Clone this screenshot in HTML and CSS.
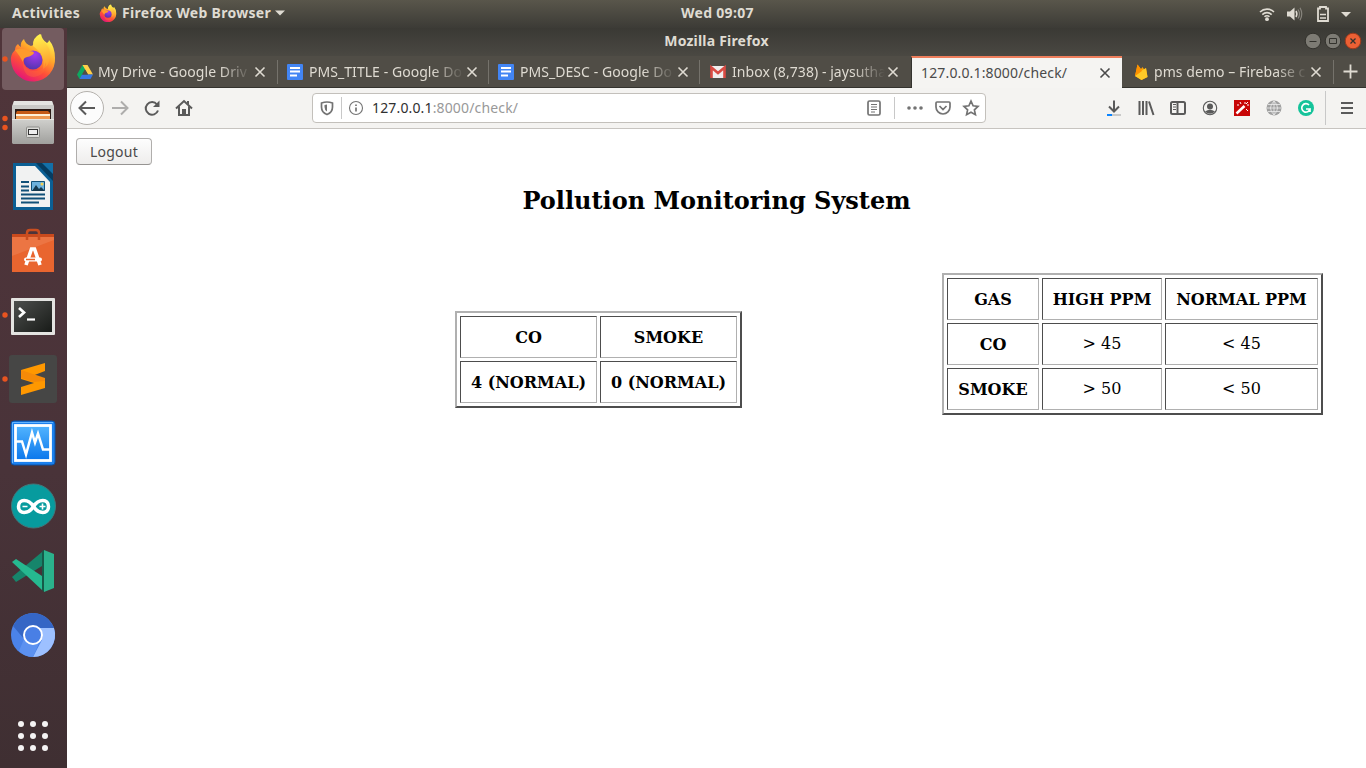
FILE: index.html
```html
<!DOCTYPE html>
<html lang="en">
<head>
<meta charset="utf-8">
<title>Pollution Monitoring System</title>
<link rel="stylesheet" href="styles.css">
</head>
<body>
<header class="panel">
  <span class="activities">Activities</span>
  <span class="app-menu">
    <svg width="18" height="18" viewBox="10 5 46 48"><use href="#firefox"/></svg>
    <span class="app-name">Firefox Web Browser</span>
    <svg width="10" height="6"><path d="M0 .5h10L5 5.500z" fill="#dfdbd2"/></svg>
  </span>
  <span class="clock">Wed 09:07</span>
  <svg class="status" width="100" height="27" viewBox="1256 0 100 27" fill="none" stroke="#dfdbd2">
    <path d="M1260 11a10 10 0 0 1 14 0M1262.300 13.600a6.700 6.700 0 0 1 9.400 0M1264.500 15.800a3.500 3.500 0 0 1 5 0" stroke-width="1.600"/><circle cx="1267" cy="18.200" r="1.900" fill="#dfdbd2" stroke="none"/>
    <path d="M1287 10.500h3l4.500-4v13l-4.500-4h-3z" fill="#dfdbd2" stroke="none"/><path d="M1296 10q1.800 3 0 6" stroke-width="1.500"/><path d="M1298 8.500q3 4.500 0 9M1300 6.800q3.500 6.200 0 12.400" stroke="#87847c" stroke-width="1.200"/>
    <path d="M1318 7.500h2V6h6v1.500h2v12.500h-10z" stroke-width="1.800"/><path d="M1320 13.500h6M1320 17h6" stroke-width="1.600"/>
    <path d="M1341 11h10l-5 5z" fill="#dfdbd2" stroke="none"/>
  </svg>
</header>
<div class="desktop">
<nav class="dock">
  <svg width="67" height="64">
    <defs>
      <linearGradient id="fxBody" x1=".8" y1=".1" x2=".3" y2="1"><stop offset="0" stop-color="#fff44f"/><stop offset=".35" stop-color="#ffa52a"/><stop offset=".65" stop-color="#ff4f38"/><stop offset="1" stop-color="#e2127b"/></linearGradient>
      <radialGradient id="fxGlobe" cx=".6" cy=".2" r=".9"><stop offset="0" stop-color="#a63af0"/><stop offset="1" stop-color="#4a35a8"/></radialGradient>
      <linearGradient id="fxFlame" x1=".5" y1="0" x2=".6" y2="1"><stop offset="0" stop-color="#fff44f"/><stop offset="1" stop-color="#ff9328"/></linearGradient>
      <linearGradient id="gray" x1="0" y1="0" x2="0" y2="1"><stop offset="0" stop-color="#d0d0cd"/><stop offset="1" stop-color="#a0a09d"/></linearGradient>
      <linearGradient id="blue" x1="0" y1="0" x2="0" y2="1"><stop offset="0" stop-color="#53b5ff"/><stop offset="1" stop-color="#0a76eb"/></linearGradient>
      <linearGradient id="term" x1="0" y1="0" x2="1" y2="1"><stop offset="0" stop-color="#4d4f4d"/><stop offset="1" stop-color="#181b18"/></linearGradient>
      <g id="firefox">
        <path d="M15 22q0-4 3-6 1 2 3 3-1-5 3-8 1 5 7 7 2-1 3-1 0-7 7-11 1 6 6 9 2-1 2-3 6 7 6 18a22 22 0 0 1-44 3q-1-6 4-11z" fill="url(#fxBody)"/>
        <path d="M33 18q-1-8 7-12 1 6 6 10 4 4 4 11 0 10-7 14 3-14-10-23z" fill="url(#fxFlame)"/>
        <circle cx="33" cy="32" r="9.500" fill="url(#fxGlobe)"/>
        <path d="M15 22q8-3 14 1 5 0 5 2-2 3-7 4-4 1-4 5-3-6-8-12z" fill="#ff9a2c"/>
        <path d="M23 34q3 10 13 9 8-1 10-9 1 13-12 15-11 0-11-15z" fill="#ff6b36" opacity=".4"/>
      </g>
    </defs>
    <rect x="2" y="0" width="62" height="62" rx="4" fill="#745c60"/>
    <use href="#firefox"/><circle cx="5" cy="31" r="2.700" fill="#e95420"/>
  </svg>
  <svg width="67" height="64">
    <path d="M14 9h38l2 5v13H12V14z" fill="#c9c9c6"/><path d="M14 9h38l1 4H13z" fill="#e4e4e1"/><path d="M15 17h36v10H15z" fill="#2b1c17"/><path d="M17 19h31l2 2v6H16v-6z" fill="#c55a17"/><path d="M16 22h34v2H16z" fill="#fff0d8"/><path d="M16 24h34v3H16z" fill="#ee9a53"/>
    <path d="M12 27h42v24l-1 1H13l-1-1z" fill="url(#gray)"/><path d="M12 27.500h42" stroke="#e6e6e3"/><rect x="26.500" y="35" width="13" height="10.500" rx="1" fill="#dadad7" stroke="#8d8d8a"/><rect x="28.500" y="37.500" width="9" height="5" fill="#eee" stroke="#333"/>
    <circle cx="5" cy="26.500" r="2.700" fill="#e95420"/><circle cx="5" cy="35.500" r="2.700" fill="#e95420"/>
  </svg>
  <svg width="67" height="64">
    <path d="M13 7h40v47H13z" fill="#0b5f94"/><path d="M36 7h17v18z" fill="#063c60"/><path d="M42 7h11v11z" fill="#1370a8"/><path d="M16 10h19l15 16v25H16z" fill="#f1f2f2"/>
    <path d="M21 26h8M21 30.500h8M21 34.500h8M21 38.500h24M21 42.500h24M21 46.500h18" stroke="#105078" stroke-width="2"/><path d="M31.500 25.500h13v9h-13z" fill="#6bb0dc" stroke="#105078"/><path d="M32 35l4-6 3 4 2-2 4 4z" fill="#14384e"/><circle cx="42" cy="28" r="1.500" fill="#f5cf50"/>
  </svg>
  <svg width="67" height="64">
    <path d="M12 14h42v38H12z" fill="#e9652f"/><path d="M12 14h42v3H12z" fill="#c94a1d"/><path d="M12 17h42v3l-42 16z" fill="#f08558" opacity=".5"/><path d="M27 20v-7q0-3 3-3h6q3 0 3 3v7" fill="none" stroke="#c94e20" stroke-width="2.500"/>
    <path d="M26 45l5.500-16h3L40 45" fill="none" stroke="#fff" stroke-width="3.600"/><rect x="24" y="37.500" width="18" height="4" rx="2" fill="#fff"/><path d="M26 39.500h9" stroke="#e9652f" stroke-width="1.500"/>
  </svg>
  <svg width="67" height="64">
    <rect x="11" y="14" width="44" height="37" rx="1" fill="#e4e4e1"/><rect x="14" y="17" width="38" height="31" fill="url(#term)"/><path d="M19 24l5 4.500-5 4.500" fill="none" stroke="#fff" stroke-width="2.700"/><path d="M27 35.500h8" stroke="#fff" stroke-width="2.200"/><circle cx="5" cy="31" r="2.700" fill="#e95420"/>
  </svg>
  <svg width="67" height="64">
    <rect x="9" y="7" width="48" height="48" rx="3" fill="#464645"/><path d="M21 22l24-7v8l-13 5 13 3v9l-24 7v-8l13-4-13-4z" fill="#ff9800"/><path d="M21 22l24 8v3l-11 1-13-4z" fill="#f58a08"/><circle cx="5" cy="31" r="2.700" fill="#e95420"/>
  </svg>
  <svg width="67" height="64">
    <rect x="11" y="9" width="44" height="44" rx="3" fill="#1b80ee" stroke="#0c51a4"/><path d="M12.500 51V10.500H53" stroke="#65b4ff" fill="none"/><rect x="15.500" y="13.500" width="35" height="35" fill="url(#blue)" stroke="#fff" stroke-width="2.800"/><path d="M16 29.500h6l4 13 6-22 3 10 3-9 5 16h8" fill="none" stroke="#fff" stroke-width="2.500"/>
  </svg>
  <svg width="67" height="64">
    <circle cx="33.500" cy="30" r="22" fill="#079b9e" stroke="#43787a"/><path d="M33.500 30.500c-5-8-15-8-15 0s10 8 15 0 15-8 15 0-10 8-15 0z" fill="none" stroke="#fff" stroke-width="3.500"/><path d="M22.500 30.500h5M39.500 30.500h6M42.500 27.500v6" stroke="#fff" stroke-width="1.600"/>
  </svg>
  <svg width="67" height="64">
    <path d="M12 37L36 17l6-5v14L16 42z" fill="#16856b"/><path d="M12 22l4-3 26 17v14z" fill="#26b990"/><path d="M42 11l2-1v42l-2-2z" fill="#155a49"/><path d="M44 10l10 4v34l-10 4z" fill="#2bb28c"/>
  </svg>
  <svg width="67" height="64">
    <circle cx="33" cy="31" r="22" fill="#4b83e9"/><path d="M13 22a22 22 0 0 1 39-2l2 4H33q-7 0-9 11z" fill="#3566c5"/><path d="M54 24a22 22 0 0 1-21 29l9-17q2-7-3-12z" fill="#9dc0ff"/><path d="M24 35q5 8 15 4l-6 14q-8 0-14-6z" fill="#5c91f0"/><circle cx="33" cy="31" r="9" fill="#497fe5" stroke="#fff" stroke-width="2"/>
  </svg>
  <svg class="apps" width="67" height="64" fill="#f5f3f3"><circle cx="21" cy="20" r="3"/><circle cx="33" cy="20" r="3"/><circle cx="45" cy="20" r="3"/><circle cx="21" cy="32" r="3"/><circle cx="33" cy="32" r="3"/><circle cx="45" cy="32" r="3"/><circle cx="21" cy="44" r="3"/><circle cx="33" cy="44" r="3"/><circle cx="45" cy="44" r="3"/></svg>
</nav>
<main class="window">
  <div class="titlebar">
    <span class="window-title">Mozilla Firefox</span>
    <svg class="controls" width="58" height="18" viewBox="1304 32 58 18" fill="none" stroke="#33322d"><circle cx="1313" cy="41" r="7.800" fill="#7d7b74"/><path d="M1309.500 41.500h7"/><circle cx="1333" cy="41" r="7.800" fill="#7d7b74"/><path d="M1329.500 38.500h7v5h-7z"/><circle cx="1353" cy="41" r="7.800" fill="#ec6034" stroke="#9e3a1c"/><path d="M1350.500 38.500l5 5m0-5l-5 5" stroke-width="1.300"/></svg>
  </div>
  <div class="tabs">
    <div class="tab"><svg width="16" height="16"><path d="M5.500 1h5L5 11l-2.500 4L0 10.500z" fill="#0da960"/><path d="M5.500 1h5L16 10.500h-5z" fill="#ffcf48"/><path d="M5 10.500h11L13.500 15h-11z" fill="#3777e3"/><path d="M8 5.500l3 5H5z" fill="#504d46"/></svg><span class="label">My Drive - Google Driv</span><svg class="close" width="16" height="16"><path d="M3.500 3.500l9 9m0-9l-9 9"/></svg></div>
    <div class="tab"><svg width="16" height="16"><rect width="16" height="16" rx="1" fill="#4285f4"/><path d="M3 4h10M3 7.500h10M3 11.500h7" stroke="#fff" stroke-width="2"/></svg><span class="label">PMS_TITLE - Google Do</span><svg class="close" width="16" height="16"><path d="M3.500 3.500l9 9m0-9l-9 9"/></svg></div>
    <div class="tab"><svg width="16" height="16"><rect width="16" height="16" rx="1" fill="#4285f4"/><path d="M3 4h10M3 7.500h10M3 11.500h7" stroke="#fff" stroke-width="2"/></svg><span class="label">PMS_DESC - Google Do</span><svg class="close" width="16" height="16"><path d="M3.500 3.500l9 9m0-9l-9 9"/></svg></div>
    <div class="tab mail"><svg width="16" height="16"><path d="M1 2h14v12H1z" fill="#f1eeee"/><path d="M1.500 14V3.500L8 9l6.500-5.500V14" fill="none" stroke="#d94b43" stroke-width="2.600"/></svg><span class="label">Inbox (8,738) - jaysutha</span><svg class="close" width="16" height="16"><path d="M3.500 3.500l9 9m0-9l-9 9"/></svg></div>
    <div class="tab active"><span class="label">127.0.0.1:8000/check/</span><svg class="close" width="16" height="16"><path d="M3.500 3.500l9 9m0-9l-9 9"/></svg></div>
    <div class="tab last"><svg width="16" height="16"><path d="M2 12L4.500.5 8 5l1.500-2 2 3 1.500-2 1.500 9-6 3z" fill="#ffa000"/><path d="M2 12l6-5 5-3 1.500 9-6 3z" fill="#ffca28"/><path d="M2 12L4.500.5 9 7z" fill="#ff9100"/></svg><span class="label">pms demo – Firebase c</span><svg class="close" width="16" height="16"><path d="M3.500 3.500l9 9m0-9l-9 9"/></svg></div>
    <svg class="new-tab" width="32" height="32"><path d="M9.500 15.500h14M16.500 8.500v14" stroke="#dfdbd2" stroke-width="1.800"/></svg>
  </div>
  <div class="toolbar">
    <svg class="back" width="34" height="40" viewBox="-17 -20 34 40"><circle r="16.500" fill="#fcfcfc" stroke="#b4b1ad"/><path d="M8 0H-7M-1-6.500L-7.500 0-1 6.500" class="line"/></svg>
    <svg width="32" height="32" viewBox="-16 -16 32 32" opacity=".45"><path d="M-8 0H7M1-6.500L7.500 0 1 6.500" class="line"/></svg>
    <svg width="32" height="32" viewBox="-16 -16 32 32"><path d="M5-3.500A6.300 6.300 0 1 0 6 2.500" class="line"/><path d="M7.500-7.500V-1H1z" fill="#5a5a5a"/></svg>
    <svg width="32" height="32" viewBox="-16 -16 32 32"><path d="M-8 .5L0-7 8 .5M-5-1.500V7H5v-8.500" class="line"/><path d="M-2 7V1h4v6M3-5V-7h2v4" fill="#5a5a5a"/></svg>
    <div class="urlbar">
      <svg width="28" height="28" viewBox="-14 -14 28 28"><path d="M-5.500-5Q0-7 5.500-5V-1Q5.500 4.500 0 6.500-5.500 4.500-5.500-1z" class="field"/><path d="M0-3.500V3.500Q-2.500 2-2.500-1v-2z" fill="#737373"/></svg>
      <i class="rule"></i>
      <svg class="info" width="28" height="28" viewBox="-14 -14 28 28"><circle r="6.500" class="field thin"/><path d="M0-3.500v1.500M0-.5V3.500" class="field"/></svg>
      <span class="address"><b>127.0.0.1</b>:8000/check/</span>
      <svg class="reader" width="28" height="28" viewBox="-14 -14 28 28"><rect x="-6" y="-7" width="12" height="14" rx="1.500" class="field"/><path d="M-3-3.500h6M-3-1h6M-3 1.500h6M-3 4h4" class="field thin"/></svg>
      <i class="rule"></i>
      <svg class="dots" width="28" height="28" viewBox="-14 -14 28 28" fill="#737373"><circle cx="-6" r="1.800"/><circle r="1.800"/><circle cx="6" r="1.800"/></svg>
      <svg width="28" height="28" viewBox="-14 -14 28 28"><path d="M-6-6H6Q7-6 7-5V-1A7 7 0 0 1-7-1V-5Q-7-6-6-6zM-3.500-2L0 1.500 3.500-2" class="field"/></svg>
      <svg width="28" height="28" viewBox="-14 -14 28 28"><path d="M0-7L2.100-2.200 7-1.700 3.400 1.800 4.400 6.700 0 4.200-4.400 6.700-3.400 1.800-7-1.700-2.100-2.200z" class="field"/></svg>
    </div>
    <div class="tools">
      <svg width="32" height="32" viewBox="-16 -16 32 32"><path d="M0-7.500V3M-5-1.500L0 3.500 5-1.500" class="line"/><path d="M-7 7h14" stroke="#c9c9c9" stroke-width="2"/><path d="M-7 7h5" stroke="#0a84ff" stroke-width="2"/></svg>
      <svg width="32" height="32" viewBox="-16 -16 32 32"><path d="M-6.500-7V7M-3-7V7M.500-7V7M3-6.500L7.500 7" class="line"/></svg>
      <svg width="32" height="32" viewBox="-16 -16 32 32"><rect x="-7" y="-6" width="14" height="12" rx="1.500" class="line"/><path d="M-.5-6V6" class="line"/><path d="M-5-3.500h3M-5-1h3M-5 1.500h3" stroke="#5a5a5a"/></svg>
      <svg width="32" height="32" viewBox="-16 -16 32 32"><circle r="6.700" class="line thin"/><circle cy="-1.500" r="3" fill="#5a5a5a"/><path d="M-5 3.500Q0 0 5 3.500 0 8-5 3.500z" fill="#5a5a5a"/></svg>
      <svg width="32" height="32" viewBox="-16 -16 32 32"><path d="M-8-8H8V8H-8z" fill="#c80606"/><path d="M-5.500 5.500L2.500-2" stroke="#fff" stroke-width="2.500"/><path d="M3-6v2M5-3h2M-2-6l1 2M4 1l2 2M-5-3h2M6-6L4-4" stroke="#fff"/></svg>
      <svg width="32" height="32" viewBox="-16 -16 32 32"><circle r="7.500" fill="#a0a0a0"/><path d="M-7 0H7M0-7V7M-6-3.500H6M-6 3.500H6M0-7Q-7 0 0 7 7 0 0-7" stroke="#eee" stroke-width=".8" fill="none"/></svg>
      <svg width="32" height="32" viewBox="-16 -16 32 32"><circle r="8" fill="#15c39a"/><path d="M3-3A4.200 4.200 0 1 0 4 1H0M4 1V4" fill="none" stroke="#fff" stroke-width="1.700"/></svg>
    </div>
    <i class="rule tall"></i>
    <svg class="menu" width="32" height="32" viewBox="-16 -16 32 32"><path d="M-6-5H6M-6 0H6M-6 5H6" class="line"/></svg>
  </div>
  <section class="page">
    <button class="logout">Logout</button>
    <h2>Pollution Monitoring System</h2>
    <div class="tables">
      <table class="readings">
        <tr><th>CO</th><th>SMOKE</th></tr>
        <tr><th>4 (NORMAL)</th><th>0 (NORMAL)</th></tr>
      </table>
      <table class="limits">
        <tr><th class="gas">GAS</th><th class="high">HIGH PPM</th><th class="normal">NORMAL PPM</th></tr>
        <tr><th>CO</th><td>&gt; 45</td><td>&lt; 45</td></tr>
        <tr><th>SMOKE</th><td>&gt; 50</td><td>&lt; 50</td></tr>
      </table>
    </div>
  </section>
</main>
</div>
</body>
</html>
```
FILE: styles.css
```css
* { box-sizing: border-box; }
body { margin: 0; width: 1366px; height: 768px; overflow: hidden; font: 14px "Noto Sans", sans-serif; color: #dfdbd2; background: #fff; }
svg { display: block; flex: none; }
.panel { display: grid; grid-template-columns: 99px 582px 1fr auto; align-items: center; height: 28px; padding-right: 10px; background: linear-gradient(#59564b, #3c3b36); font-weight: bold; font-size: 14px; letter-spacing: .3px; white-space: nowrap; line-height: 26px; }
.panel > span { height: 28px; }
.activities { padding-left: 12px; }
.app-menu { display: flex; align-items: center; padding-bottom: 2px; }
.app-name { margin: 0 4px 0 5px; }
.desktop { display: flex; height: 740px; }
.dock { display: flex; flex-direction: column; width: 67px; background: linear-gradient(#50353a, #493339 60%, #3f2f32); }
.apps { margin-top: 36px; }
.window { flex: 1; min-width: 0; display: flex; flex-direction: column; }
.titlebar { display: grid; grid-template-columns: 1fr auto 1fr; height: 28px; align-items: center; background: linear-gradient(#3a3934, #4a4842); font-weight: bold; line-height: 26px; letter-spacing: .2px; padding-bottom: 2px; }
.window-title { grid-column: 2; }
.controls { justify-self: end; margin-right: 4px; }
.tabs { display: flex; height: 32px; background: #504d46; box-shadow: inset 0 -1px #34332e; }
.tab { position: relative; display: flex; align-items: center; width: 211px; padding: 0 9px; flex: none; }
.tab:first-child { padding: 0 10px; }
.mail { padding: 0 10px; }
.tab.last { width: 212px; padding: 0 10px 0 11px; }
.tab:not(.active)::after { content: ""; position: absolute; right: 0; top: 4px; height: 24px; width: 1px; background: #75726b; }
.tab.mail::after { display: none; }
.label { flex: 1; min-width: 0; margin: 0 0 0 5px; letter-spacing: .06px; overflow: hidden; white-space: nowrap; line-height: 24px; -webkit-mask-image: linear-gradient(to right, #000 calc(100% - 32px), transparent); mask-image: linear-gradient(to right, #000 calc(100% - 32px), transparent); }
.tab:nth-child(2) .label, .tab:nth-child(3) .label { margin-left: 6px; letter-spacing: .05px; }
.mail .label { margin-left: 6px; }
.close { fill: none; stroke: #dfdbd2; stroke-width: 1.6; }
.tab.active { background: #f5f4f2; color: #4a4a4a; border-top: 2px solid #ee7e5c; border-left: 1px solid #34332e; padding: 0 9px 1px 9px; }
.active .label { margin-left: 0; letter-spacing: .15px; mask-image: none; -webkit-mask-image: none; }
.active .close { stroke: #4a4a4a; }
.toolbar { display: flex; align-items: center; height: 41px; padding: 0 3px 1px; background: #f4f3f1; border-bottom: 1px solid #c7c4c0; color: #999; }
.line { fill: none; stroke: #5a5a5a; stroke-width: 2; }
.field { fill: none; stroke: #737373; stroke-width: 1.7; }
.thin { stroke-width: 1.1; }
.urlbar { display: flex; align-items: center; width: 674px; height: 30px; margin-left: 112px; background: #fff; border: 1px solid #c3c0bb; border-radius: 4px; }
.rule { width: 1px; height: 22px; background: #c8c8c8; }
.address { flex: 1; margin-left: 2px; padding-top: 1px; line-height: 24px; letter-spacing: .15px; }
.address b { font-weight: normal; color: #303030; }
.reader { margin-right: 6px; }
.dots { margin-left: 6px; }
.tools { display: flex; margin-left: 112px; }
.tall { height: 34px; margin: 0 5px 0 3px; }
.page { flex: 1; padding: 9px; color: #000; font: 16px "DejaVu Serif", serif; }
.logout { display: block; width: 76px; height: 27px; padding: 0; border: 1px solid #b0aeac; border-bottom-color: #969492; border-radius: 4px; background: linear-gradient(#fdfdfd, #eeedec); font: 14px "Noto Sans", sans-serif; letter-spacing: .25px; color: #4a4a4a; }
h2 { margin: 22px 0 0; line-height: 28px; font-size: 24px; text-align: center; }
.tables { display: flex; justify-content: space-between; align-items: flex-start; padding: 58px 34px 0 379px; }
table { border: 2px solid; border-color: #b0b0b0 #4d4d4d #4d4d4d #b0b0b0; border-spacing: 3px; }
.readings { margin-top: 38px; }
th, td { height: 42px; padding: 0; border: 1px solid; border-color: #4d4d4d #b0b0b0 #b0b0b0 #4d4d4d; text-align: center; white-space: nowrap; line-height: 20px; }
th { padding-top: 2px; }
td { padding-bottom: 1px; }
.readings th { width: 137px; }
.limits .gas { width: 92px; }
.limits .high { width: 120px; }
.limits .normal { width: 153px; }
```
